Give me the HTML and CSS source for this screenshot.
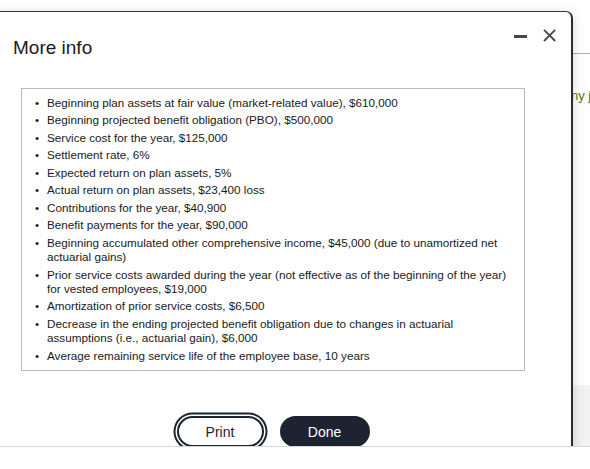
FILE: index.html
```html
<!DOCTYPE html>
<html lang="en">
<head>
<meta charset="utf-8">
<title>More info</title>
<link rel="stylesheet" href="styles.css">
</head>
<body>
<div class="stage">
  <div class="page">
    <div class="page-rule"></div>
    <div class="page-text">ny j</div>
    <div class="page-panel"></div>
  </div>
  <div class="dialog" role="dialog" aria-labelledby="dlg-title">
    <div class="dialog-header">
      <h2 class="dialog-title" id="dlg-title">More info</h2>
      <div class="controls">
        <button class="icon-btn" aria-label="Minimize">
          <svg width="13" height="13" viewBox="0 0 13 13"><rect x="0" y="6" width="13" height="3" fill="#454a51"/></svg>
        </button>
        <button class="icon-btn" aria-label="Close">
          <svg width="13" height="13" viewBox="0 0 13 13"><path d="M1 0.8 L12.2 12 M12.2 0.8 L1 12" stroke="#454a51" stroke-width="1.8" fill="none"/></svg>
        </button>
      </div>
    </div>
    <div class="info-box">
      <ul class="info-list">
        <li>Beginning plan assets at fair value (market-related value), $610,000</li>
        <li>Beginning projected benefit obligation (PBO), $500,000</li>
        <li>Service cost for the year, $125,000</li>
        <li>Settlement rate, 6%</li>
        <li>Expected return on plan assets, 5%</li>
        <li>Actual return on plan assets, $23,400 loss</li>
        <li>Contributions for the year, $40,900</li>
        <li>Benefit payments for the year, $90,000</li>
        <li>Beginning accumulated other comprehensive income, $45,000 (due to unamortized net actuarial gains)</li>
        <li>Prior service costs awarded during the year (not effective as of the beginning of the year) for vested employees, $19,000</li>
        <li>Amortization of prior service costs, $6,500</li>
        <li>Decrease in the ending projected benefit obligation due to changes in actuarial assumptions (i.e., actuarial gain), $6,000</li>
        <li>Average remaining service life of the employee base, 10 years</li>
      </ul>
    </div>
    <div class="actions">
      <button class="btn btn-print">Print</button>
      <button class="btn btn-done">Done</button>
    </div>
  </div>
</div>
</body>
</html>
```

FILE: styles.css
```css
* { box-sizing: border-box; }

html, body {
  margin: 0;
  padding: 0;
  background: #ffffff;
  font-family: "Liberation Sans", Arial, sans-serif;
}

.stage {
  position: relative;
  height: 447px;
  overflow: hidden;
  border-bottom: 1px solid #d6d6d6;
}

.page {
  padding-top: 53px;
}

.page-rule {
  border-top: 1px solid #c7a1b1;
}

.page-text {
  margin-top: 34px;
  padding-left: 571px;
  font-size: 13px;
  line-height: 16px;
  color: #4b7d18;
  white-space: nowrap;
  overflow: hidden;
}

.page-panel {
  margin-top: 281px;
  height: 120px;
  background: #f2f2f2;
}

.dialog {
  position: absolute;
  left: 0;
  top: 11px;
  width: 573px;
  height: 480px;
  background: #ffffff;
  border-top: 1px solid #333333;
  border-right: 2px solid #2d2d2d;
  border-radius: 0 7px 0 0;
  box-shadow: 0 2px 12px rgba(0, 0, 0, 0.16);
  z-index: 1;
}

.dialog-header {
  display: flex;
  justify-content: space-between;
  align-items: flex-start;
  padding: 0 15px 0 13px;
}

.dialog-title {
  margin: 25px 0 0;
  font-size: 19px;
  line-height: 22px;
  font-weight: normal;
  color: #1b1b1b;
}

.controls {
  display: flex;
  gap: 16px;
  margin-top: 17px;
}

.icon-btn {
  display: block;
  padding: 0;
  margin: 0;
  border: 0;
  background: none;
  width: 13px;
  height: 13px;
}

.icon-btn svg { display: block; }

.info-box {
  margin: 29px 0 0 21px;
  width: 504px;
  border: 1px solid #b9b9b9;
}

.info-list {
  list-style: none;
  margin: 0;
  padding: 7px 9px 7px 12px;
  font-size: 11.7px;
  line-height: 14.3px;
  color: #1a1a1a;
}

.info-list li {
  display: flex;
}

.info-list li + li {
  margin-top: 3.2px;
}

.info-list li::before {
  content: "\2022";
  flex: none;
  width: 12px;
  padding-left: 1px;
}

.actions {
  display: flex;
  justify-content: center;
  gap: 16px;
  margin: 45px 0 0 21px;
  width: 504px;
}

.btn {
  height: 31px;
  border-radius: 16px;
  font-family: "Liberation Sans", Arial, sans-serif;
  font-size: 14px;
  padding: 0;
  cursor: pointer;
}

.btn-print {
  width: 87px;
  background: #ffffff;
  color: #1c2331;
  border: 2px solid #1c2331;
  box-shadow: 0 0 0 1.5px #ffffff, 0 0 0 3.5px #1c2331;
}

.btn-done {
  width: 90px;
  background: #1c2331;
  color: #ffffff;
  border: 0;
}
```
